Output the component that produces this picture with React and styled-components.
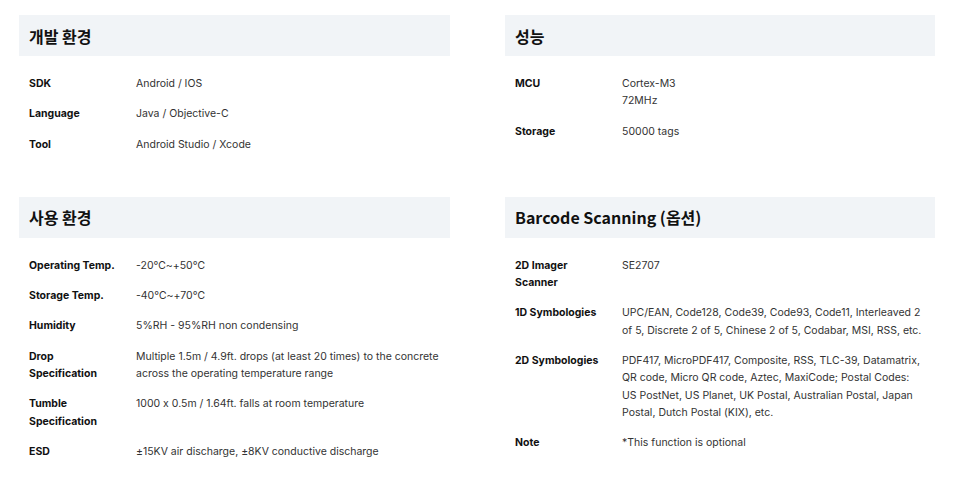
import React from 'react';
import styled, { createGlobalStyle } from 'styled-components';

const GlobalStyle = createGlobalStyle`
  body {
    margin: 0;
    background: #ffffff;
    font-family: "Inter", "Noto Sans CJK KR", sans-serif;
    font-feature-settings: "calt" 0;
  }
`;

const Page = styled.main`
  display: grid;
  grid-template-columns: 431px 430px;
  column-gap: 55px;
  row-gap: 44px;
  padding: 15px 25px 0 19px;
`;

const Section = styled.section`
  display: flex;
  flex-direction: column;
`;

const SectionHeader = styled.h2`
  margin: 0 0 19px;
  height: 41px;
  display: flex;
  align-items: center;
  padding: 0 10px;
  background: #f1f4f7;
  font-family: "Noto Sans CJK KR", "Noto Sans", sans-serif;
  font-size: 16px;
  font-weight: 700;
  color: #111;
`;

const SpecList = styled.dl`
  margin: 0;
  padding: 0 10px;
  display: grid;
  grid-template-columns: 107px 1fr;
  row-gap: 13px;
  font-size: 10.5px;
  line-height: 17.3px;
`;

const Label = styled.dt`
  font-weight: 700;
  color: #111;
  padding-right: 20px;
`;

const Value = styled.dd`
  margin: 0;
  color: #333;
`;

const sections = [
  {
    title: '개발 환경',
    rows: [
      ['SDK', 'Android / IOS'],
      ['Language', 'Java / Objective-C'],
      ['Tool', 'Android Studio / Xcode'],
    ],
  },
  {
    title: '성능',
    rows: [
      ['MCU', <>Cortex-M3<br />72MHz</>],
      ['Storage', '50000 tags'],
    ],
  },
  {
    title: '사용 환경',
    rows: [
      ['Operating Temp.', '-20℃~+50℃'],
      ['Storage Temp.', '-40℃~+70℃'],
      ['Humidity', '5%RH - 95%RH non condensing'],
      ['Drop Specification', 'Multiple 1.5m / 4.9ft. drops (at least 20 times) to the concrete across the operating temperature range'],
      ['Tumble Specification', '1000 x 0.5m / 1.64ft. falls at room temperature'],
      ['ESD', '±15KV air discharge, ±8KV conductive discharge'],
    ],
  },
  {
    title: 'Barcode Scanning (옵션)',
    rows: [
      ['2D Imager Scanner', 'SE2707'],
      ['1D Symbologies', 'UPC/EAN, Code128, Code39, Code93, Code11, Interleaved 2 of 5, Discrete 2 of 5, Chinese 2 of 5, Codabar, MSI, RSS, etc.'],
      ['2D Symbologies', 'PDF417, MicroPDF417, Composite, RSS, TLC-39, Datamatrix, QR code, Micro QR code, Aztec, MaxiCode; Postal Codes: US PostNet, US Planet, UK Postal, Australian Postal, Japan Postal, Dutch Postal (KIX), etc.'],
      ['Note', '*This function is optional'],
    ],
  },
];

const App = () => (
  <>
    <GlobalStyle />
    <Page>
      {sections.map((section) => (
        <Section key={section.title}>
          <SectionHeader>{section.title}</SectionHeader>
          <SpecList>
            {section.rows.map(([label, value]) => (
              <React.Fragment key={label}>
                <Label>{label}</Label>
                <Value>{value}</Value>
              </React.Fragment>
            ))}
          </SpecList>
        </Section>
      ))}
    </Page>
  </>
);

export default App;
